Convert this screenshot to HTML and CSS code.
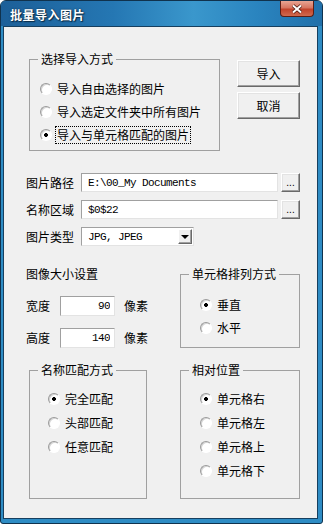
FILE: index.html
```html
<!doctype html>
<html lang="zh">
<head>
    <meta charset="utf-8">
    <title>批量导入图片</title>
    <link rel="stylesheet" href="styles.css">
</head>
<body>
    <div class="window">
        <div class="titlebar">
            <span class="caption">批量导入图片</span>
            <button class="btn-close" title="关闭">
                <svg width="12" height="10" viewBox="0 0 12 10">
                    <path d="M2 1.5L10 8.5M10 1.5L2 8.5" stroke="#4a1810" stroke-width="3.6" />
                    <path d="M2 1.5L10 8.5M10 1.5L2 8.5" stroke="#fff" stroke-width="2" />
                </svg>
            </button>
        </div>

        <div class="client">
            <div class="sec-top">
                <fieldset class="group group-mode">
                    <legend>选择导入方式</legend>
                    <div class="opts">
                        <label class="opt"><input type="radio" name="mode"><span>导入自由选择的图片</span></label>
                        <label class="opt"><input type="radio" name="mode"><span>导入选定文件夹中所有图片</span></label>
                        <label class="opt"><input type="radio" name="mode" checked><span class="focus">导入与单元格匹配的图片</span></label>
                    </div>
                </fieldset>
                <div class="actions">
                    <button class="btn">导入</button>
                    <button class="btn">取消</button>
                </div>
            </div>

            <div class="fields">
                <div class="field">
                    <span class="lbl">图片路径</span>
                    <input class="txt val" type="text" value="E:\00_My Documents">
                    <button class="btn-dots">...</button>
                </div>
                <div class="field">
                    <span class="lbl">名称区域</span>
                    <input class="txt val" type="text" value="$0$22">
                    <button class="btn-dots">...</button>
                </div>
                <div class="field">
                    <span class="lbl">图片类型</span>
                    <div class="combo">
                        <span class="combo-val val">JPG, JPEG</span>
                        <span class="combo-btn"></span>
                    </div>
                </div>
            </div>

            <div class="sec-size">
                <div class="size">
                    <div class="size-title">图像大小设置</div>
                    <div class="size-row">
                        <span class="size-lbl">宽度</span>
                        <input class="txt num val" type="text" value="90">
                        <span class="unit">像素</span>
                    </div>
                    <div class="size-row">
                        <span class="size-lbl">高度</span>
                        <input class="txt num val" type="text" value="140">
                        <span class="unit">像素</span>
                    </div>
                </div>
                <fieldset class="group group-order">
                    <legend>单元格排列方式</legend>
                    <div class="opts">
                        <label class="opt"><input type="radio" name="order" checked><span>垂直</span></label>
                        <label class="opt"><input type="radio" name="order"><span>水平</span></label>
                    </div>
                </fieldset>
            </div>

            <div class="sec-bottom">
                <fieldset class="group group-match">
                    <legend>名称匹配方式</legend>
                    <div class="opts">
                        <label class="opt"><input type="radio" name="match" checked><span>完全匹配</span></label>
                        <label class="opt"><input type="radio" name="match"><span>头部匹配</span></label>
                        <label class="opt"><input type="radio" name="match"><span>任意匹配</span></label>
                    </div>
                </fieldset>
                <fieldset class="group group-pos">
                    <legend>相对位置</legend>
                    <div class="opts">
                        <label class="opt"><input type="radio" name="pos" checked><span>单元格右</span></label>
                        <label class="opt"><input type="radio" name="pos"><span>单元格左</span></label>
                        <label class="opt"><input type="radio" name="pos"><span>单元格上</span></label>
                        <label class="opt"><input type="radio" name="pos"><span>单元格下</span></label>
                    </div>
                </fieldset>
            </div>
        </div>
    </div>
</body>
</html>
```

FILE: styles.css
```css
* { box-sizing: border-box; }

body {
    margin: 0;
    background: #fff;
    color: #000;
    font-family: "Noto Sans CJK SC", "Liberation Sans", sans-serif;
    font-size: 12px;
    line-height: 14px;
}

.window {
    width: 323px;
    height: 524px;
    display: flex;
    flex-direction: column;
    border: 1px solid #10324d;
    border-radius: 6px 6px 3px 3px;
    background: #2e8cc4;
    overflow: hidden;
}

.titlebar {
    flex: none;
    height: 25px;
    display: flex;
    align-items: center;
    padding: 2px 0 0 9px;
    background: linear-gradient(to right, #1c5f98, #2577b3 35%, #3a97cc 60%, #2a84bf 80%, #2170aa);
}

.caption {
    color: #fff;
    font-weight: bold;
    letter-spacing: .5px;
    text-shadow: 0 0 2px #0b2b45, 1px 1px 1px #0b2b45;
}

.btn-close {
    align-self: flex-start;
    margin: -2px 8px 0 auto;
    width: 34px;
    height: 16px;
    padding: 0;
    border: 1px solid #5b1d14;
    border-top: 0;
    border-radius: 0 0 4px 4px;
    background: linear-gradient(to bottom, #e8a493, #d67560 45%, #c2432b 55%, #cf6a4f);
    display: flex;
    align-items: center;
    justify-content: center;
}

.client {
    flex: 1;
    margin: 0 4px 4px 2px;
    border: 1px solid #163f5f;
    background: #f0f0f0;
    padding: 25px 17px 0 22px;
}

/* group boxes */
.group {
    margin: 0;
    padding: 0;
    border: 1px solid #a0a0a0;
}

.group legend {
    margin-left: 8px;
    padding: 0 3px;
    line-height: 14px;
}

.opt {
    display: flex;
    align-items: center;
    gap: 5px;
    height: 23px;
}

.opt input {
    appearance: none;
    margin: 0;
    width: 12px;
    height: 12px;
    border-radius: 50%;
    border: 1px solid;
    border-color: #9a9a9a #fff #fff #9a9a9a;
    background: #fff;
    box-shadow: inset 1px 1px 0 #d4d4d4;
}

.opt input:checked {
    background: radial-gradient(circle closest-side, #000 0 1.6px, #fff 2.2px);
}

.focus {
    outline: 1px dotted #000;
    outline-offset: 1px;
}

.sec-top { display: flex; }

.group-mode { width: 191px; margin-left: 3px; }
.group-mode .opts { padding: 11px 0 4px 10px; }

.actions {
    margin: 8px 0 0 auto;
    display: flex;
    flex-direction: column;
    gap: 5px;
}

.btn,
.btn-dots {
    font: inherit;
    padding: 0;
    color: #000;
    background: #f0f0f0;
    border: 1px solid;
    border-color: #fff #696969 #696969 #fff;
    box-shadow: inset -1px -1px 0 #a0a0a0, inset 1px 1px 0 #e3e3e3;
}

.btn { width: 63px; height: 27px; }

/* path / range / type */
.fields {
    margin-top: 22px;
    display: flex;
    flex-direction: column;
    gap: 8px;
}

.field {
    display: flex;
    align-items: center;
    height: 19px;
}

.lbl { width: 55px; }

.val {
    font-family: "Liberation Mono", monospace;
    font-size: 11px;
    letter-spacing: -.6px;
}

.txt {
    height: 19px;
    margin: 0;
    padding: 0 0 0 6px;
    color: #000;
    background: #fff;
    border: 1px solid;
    border-color: #a0a0a0 #e3e3e3 #e3e3e3 #a0a0a0;
    outline: 0;
}

.field .txt { flex: 1; min-width: 0; }

.btn-dots {
    width: 19px;
    height: 19px;
    margin-left: 3px;
    font-family: "Liberation Sans", sans-serif;
    font-size: 10px;
    line-height: 12px;
}

.combo {
    width: 113px;
    height: 19px;
    display: flex;
    align-items: center;
    padding: 0 1px 0 6px;
    background: #fff;
    border: 1px solid;
    border-color: #a0a0a0 #e3e3e3 #e3e3e3 #a0a0a0;
}

.combo-val { flex: 1; }

.combo-btn {
    width: 14px;
    height: 15px;
    display: flex;
    align-items: center;
    justify-content: center;
    background: #f0f0f0;
    border: 1px solid;
    border-color: #fff #696969 #696969 #fff;
    box-shadow: inset -1px -1px 0 #a0a0a0;
}

.combo-btn::after {
    content: "";
    border-left: 4px solid transparent;
    border-right: 4px solid transparent;
    border-top: 4px solid #000;
}

/* size */
.sec-size {
    margin-top: 21px;
    display: flex;
}

.size { flex: 1; }

.size-row {
    display: flex;
    align-items: center;
    height: 20px;
    margin-top: 12px;
}

.size-title + .size-row { margin-top: 15px; }

.size-lbl { width: 34px; }

.num {
    width: 55px;
    height: 20px;
    padding: 0 4px 0 0;
    text-align: right;
}

.unit { margin-left: 9px; }

.group-order { width: 120px; }
.group-order .opts { padding: 12px 0 7px 19px; }

/* bottom groups */
.sec-bottom {
    margin-top: 15px;
    display: flex;
    justify-content: space-between;
}

.group-match { width: 118px; margin-left: 3px; }
.group-pos { width: 120px; }

.group-match .opt,
.group-pos .opt { height: 24px; }

.group-match .opts { padding: 10px 0 15px 18px; }
.group-pos .opts { padding: 10px 0 15px 19px; }
```
